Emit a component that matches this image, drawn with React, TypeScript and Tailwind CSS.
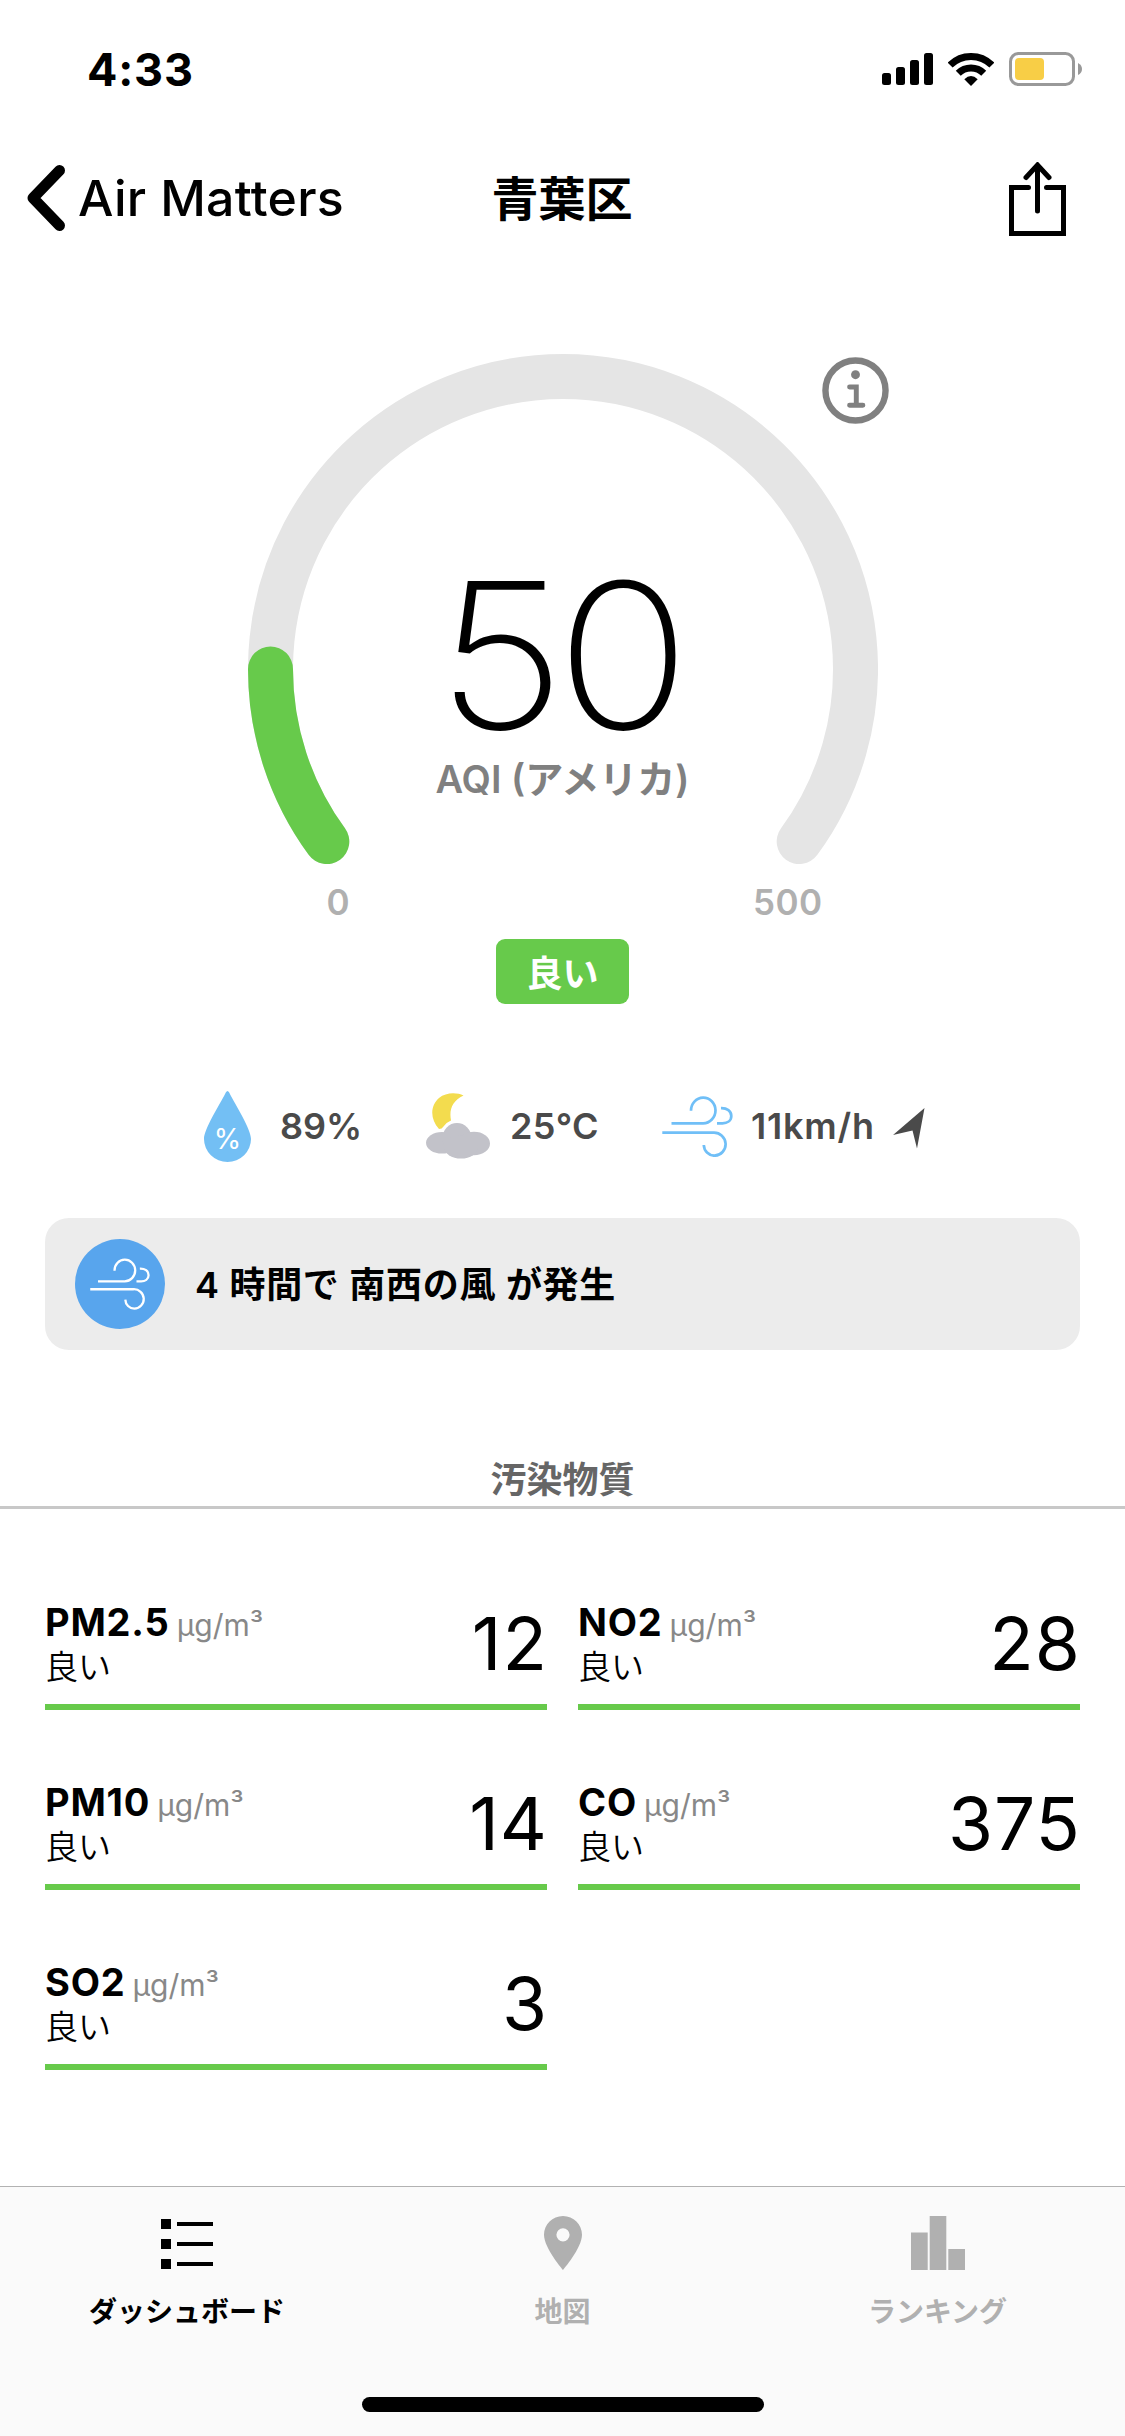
import React from "react";

const pollutants = [
  { name: "PM2.5", value: "12" },
  { name: "NO2", value: "28" },
  { name: "PM10", value: "14" },
  { name: "CO", value: "375" },
  { name: "SO2", value: "3" },
];

function WindIcon({ className }: { className: string }) {
  return (
    <svg viewBox="0 0 71 61" fill="none" stroke="currentColor" strokeWidth="2.7" className={className}>
      <path d="M9.5 27.3H41A12.4 13 0 0 0 53.5 14.3A12.2 12.8 0 0 0 29 14.8" />
      <path d="M59 12.2C65 12 69.3 15 69.3 20C69.3 25 65 27.3 60.5 27.3H55" />
      <path d="M0.3 36.7H51.5A11.6 11.5 0 0 1 52.5 59.7A11 11 0 0 1 41.8 49" />
    </svg>
  );
}

function StatusBar() {
  return (
    <div className="flex h-[138px] shrink-0 items-center justify-between pl-[87px] pr-[43px]">
      <span className="text-[45px] font-bold leading-none tracking-[0.8px]">4:33</span>
      <div className="flex items-center">
        <svg viewBox="0 0 51 32" className="h-8 w-[51px]">
          <rect x="0" y="20" width="9" height="12" rx="2.5" />
          <rect x="14" y="14" width="9" height="18" rx="2.5" />
          <rect x="28" y="7" width="9" height="25" rx="2.5" />
          <rect x="42" y="0" width="9" height="32" rx="2.5" />
        </svg>
        <svg viewBox="0 0 46 33" fill="none" stroke="#000" strokeWidth="7" className="ml-[15px] h-[33px] w-[46px]">
          <path d="M2.14 12.14A29.5 29.5 0 0 1 43.86 12.14" />
          <path d="M10.27 20.27A18 18 0 0 1 35.73 20.27" />
          <path d="M23 33L16.3 26.2Q23 20 29.7 26.2Z" fill="#000" stroke="none" />
        </svg>
        <svg viewBox="0 0 73 34" className="ml-[15px] h-[34px] w-[73px]">
          <rect x="1.5" y="1.5" width="63" height="31" rx="8" fill="none" stroke="#999" strokeWidth="3" />
          <rect x="6" y="6" width="29" height="22" rx="4" fill="#f8ce46" />
          <path d="M69 11Q73 13 73 17T69 23Z" fill="#999" />
        </svg>
      </div>
    </div>
  );
}

function NavBar() {
  return (
    <div className="grid h-[120px] shrink-0 grid-cols-3 items-center pl-[27px] pr-[59px]">
      <div className="flex items-center">
        <svg viewBox="0 0 38 66" fill="none" stroke="#000" strokeWidth="11" strokeLinecap="round" strokeLinejoin="round" className="h-[66px] w-[38px] shrink-0">
          <path d="M32.5 5.5L6 33L32.5 60.5" />
        </svg>
        <span className="ml-[13px] whitespace-nowrap text-[50px] font-medium leading-none tracking-[0.3px]">Air Matters</span>
      </div>
      <span className="pl-[31px] text-center text-[47px] font-bold leading-none">青葉区</span>
      <svg viewBox="0 0 57 74" fill="none" stroke="#000" strokeWidth="5" strokeLinecap="round" className="mt-px h-[74px] w-[57px] justify-self-end">
        <path d="M19.5 25.5H2.5V71.5H54.5V25.5H37.5" />
        <path d="M28.5 3V49M17 15.5L28.5 3L40 15.5" />
      </svg>
    </div>
  );
}

function Gauge() {
  return (
    <div className="flex flex-col items-center pt-[96px]">
      <div className="relative h-[512px] w-[630px]">
        <svg viewBox="0 0 630 512" fill="none" strokeWidth="45" strokeLinecap="round" className="h-full w-full">
          <path d="M78.8 487.6A292.5 292.5 0 1 1 551.2 487.6" stroke="#e5e5e5" />
          <path d="M78.8 487.6A292.5 292.5 0 0 1 22.5 315" stroke="#67ca4b" />
        </svg>
        <div className="absolute inset-x-0 top-[200px] flex flex-col items-center">
          <span className="scale-x-[1.1] pr-[8px] text-[203px] font-[160] leading-[203px] tracking-[-9px]">50</span>
          <span className="text-[38px] font-semibold leading-[44px] text-[#808080]">AQI (アメリカ)</span>
        </div>
        <svg viewBox="0 0 68 68" fill="#808080" className="absolute left-[574px] top-[3px] h-[67px] w-[67px]">
          <circle cx="34" cy="34" r="30.5" fill="none" stroke="#808080" strokeWidth="6.5" />
          <circle cx="34" cy="18" r="4.5" />
          <path d="M28 30.5H34.8V49M28 49H41.5" fill="none" stroke="#808080" strokeWidth="5" strokeLinecap="round" />
        </svg>
      </div>
      <div className="flex h-[73px] w-[630px] items-center justify-between pl-[79px] pr-[55px] text-[35px] font-semibold tracking-[0.4px] text-[#b0b0b0]">
        <span>0</span>
        <span>500</span>
      </div>
      <div className="flex h-[65px] w-[133px] items-center justify-center rounded-[9px] bg-[#67ca4b] text-[36px] font-semibold leading-none text-white">
        <span className="pt-[4px]">良い</span>
      </div>
    </div>
  );
}

function Weather() {
  return (
    <div className="my-[30px] flex h-[154px] shrink-0 items-center pl-[204px] text-[36px] font-semibold leading-none text-[#4a4a4a]">
      <div className="relative mt-[30px] h-[71px] w-[47px]">
        <svg viewBox="0 0 47 71" fill="#73bff4" className="h-full w-full">
          <path d="M21.8 1.5Q23.5 -1.5 25.2 1.5C32 15 47 38 47 48A23.5 23 0 0 1 0 48C0 38 15 15 21.8 1.5Z" />
        </svg>
        <span className="absolute inset-x-0 top-[34px] text-center text-[28px] font-normal leading-[28px] text-white">%</span>
      </div>
      <span className="ml-[29px] mt-[30px] w-[146px]">89%</span>
      <svg viewBox="0 0 64 66" className="mt-[30px] h-[66px] w-[64px]">
        <path d="M37.5 2.5C31 -0.8 20 -1 13 5C4 13 4 26 13 36Q16 36 17.5 33.5Q20 29.5 25 27.5C23 17 26 8 37.5 2.5Z" fill="#f3dc4e" />
        <g fill="#c2c2c9">
          <ellipse cx="16" cy="49.8" rx="16" ry="10.8" />
          <ellipse cx="31" cy="45" rx="14.5" ry="15" />
          <ellipse cx="48" cy="50.5" rx="16" ry="11.7" />
          <ellipse cx="35" cy="54" rx="17" ry="11.5" />
        </g>
      </svg>
      <span className="ml-[20px] mt-[30px] w-[152px] tracking-[0.4px]">25°C</span>
      <WindIcon className="mt-[30px] h-[61px] w-[71px] text-[#70bff7]" />
      <span className="ml-[18px] mt-[30px] w-[142px] tracking-[0.8px]">11km/h</span>
      <svg viewBox="0 0 32 41" fill="#4a4a4a" className="mt-[34px] h-[41px] w-[32px]">
        <path d="M31.5 0L24 40.5L19.5 22.5L0 27Z" />
      </svg>
    </div>
  );
}

function Alert() {
  return (
    <div className="mx-[45px] flex h-[132px] shrink-0 items-center rounded-[24px] bg-[#ececec] pl-[30px]">
      <div className="flex size-[90px] items-center justify-center rounded-full bg-[#58a5ed]">
        <WindIcon className="h-[52px] w-[60px] text-white" />
      </div>
      <span className="ml-[30px] pt-[2px] text-[36px] font-semibold leading-none tracking-[0.7px]">4 時間で 南西の風 が発生</span>
    </div>
  );
}

function Pollutants() {
  return (
    <div className="mx-[45px] mt-[21px] grid grid-cols-2 gap-x-[31px]">
      {pollutants.map((p) => (
        <div key={p.name} className="flex h-[180px] items-center justify-between border-b-[6px] border-[#67ca4b] pb-[14px] pt-[70px]">
          <div className="flex flex-col">
            <div className="flex h-[45px] items-baseline gap-[7px] leading-[45px]">
              <span className="text-[38px] font-bold tracking-[0.8px]">{p.name}</span>
              <span className="text-[30px] text-[#888]">µg/m³</span>
            </div>
            <span className="text-[33px] font-[350] leading-[45px]">良い</span>
          </div>
          <span className="-mr-px pb-[3px] text-[73px] leading-[87px] tracking-[1px]">{p.value}</span>
        </div>
      ))}
    </div>
  );
}

function TabBar() {
  return (
    <div className="mt-auto flex h-[250px] shrink-0 flex-col items-center border-t border-[#b2b2b2] bg-[#fafafa]">
      <div className="grid w-full grid-cols-3 pt-[29px] text-[28px] font-semibold leading-[40px] text-[#b0b0b0]">
        <div className="flex flex-col items-center pr-px text-black">
          <svg viewBox="0 0 52 54" className="h-[54px] w-[52px]">
            <path d="M0 3H10V13H0ZM0 23H10V33H0ZM0 43H10V53H0ZM16 6H52V10H16ZM16 26H52V30H16ZM16 46H52V50H16Z" />
          </svg>
          <span className="mt-[22px]">ダッシュボード</span>
        </div>
        <div className="flex flex-col items-center">
          <svg viewBox="0 0 38 54" className="h-[54px] w-[38px]" fill="#b0b0b0" fillRule="evenodd">
            <path d="M19 0C8.500 0 0 8.300 0 18.800C0 32 19 54 19 54S38 32 38 18.800C38 8.300 29.500 0 19 0ZM19 12.200A6.600 6.600 0 1 1 19 25.400A6.600 6.600 0 1 1 19 12.200Z" />
          </svg>
          <span className="mt-[22px]">地図</span>
        </div>
        <div className="flex flex-col items-center">
          <svg viewBox="0 0 54 54" className="h-[54px] w-[54px]" fill="#b0b0b0">
            <path d="M0 16.500H16.700V54H0ZM18.700 0H35.300V54H18.700ZM37.300 33H54V54H37.300Z" />
          </svg>
          <span className="mt-[22px]">ランキング</span>
        </div>
      </div>
      <div className="mb-[24px] mt-auto h-[15px] w-[402px] rounded-full bg-black" />
    </div>
  );
}

export default function App() {
  return (
    <div className="flex h-[2436px] w-[1125px] flex-col bg-white font-['Inter','Noto_Sans_CJK_JP',sans-serif] text-black" lang="ja">
      <StatusBar />
      <NavBar />
      <Gauge />
      <Weather />
      <Alert />
      <h2 className="mt-[100px] flex h-[59px] shrink-0 items-center justify-center border-b-[3px] border-[#c8c8c8] pt-[4px] text-[36px] font-semibold leading-none text-[#666]">
        汚染物質
      </h2>
      <Pollutants />
      <TabBar />
    </div>
  );
}
